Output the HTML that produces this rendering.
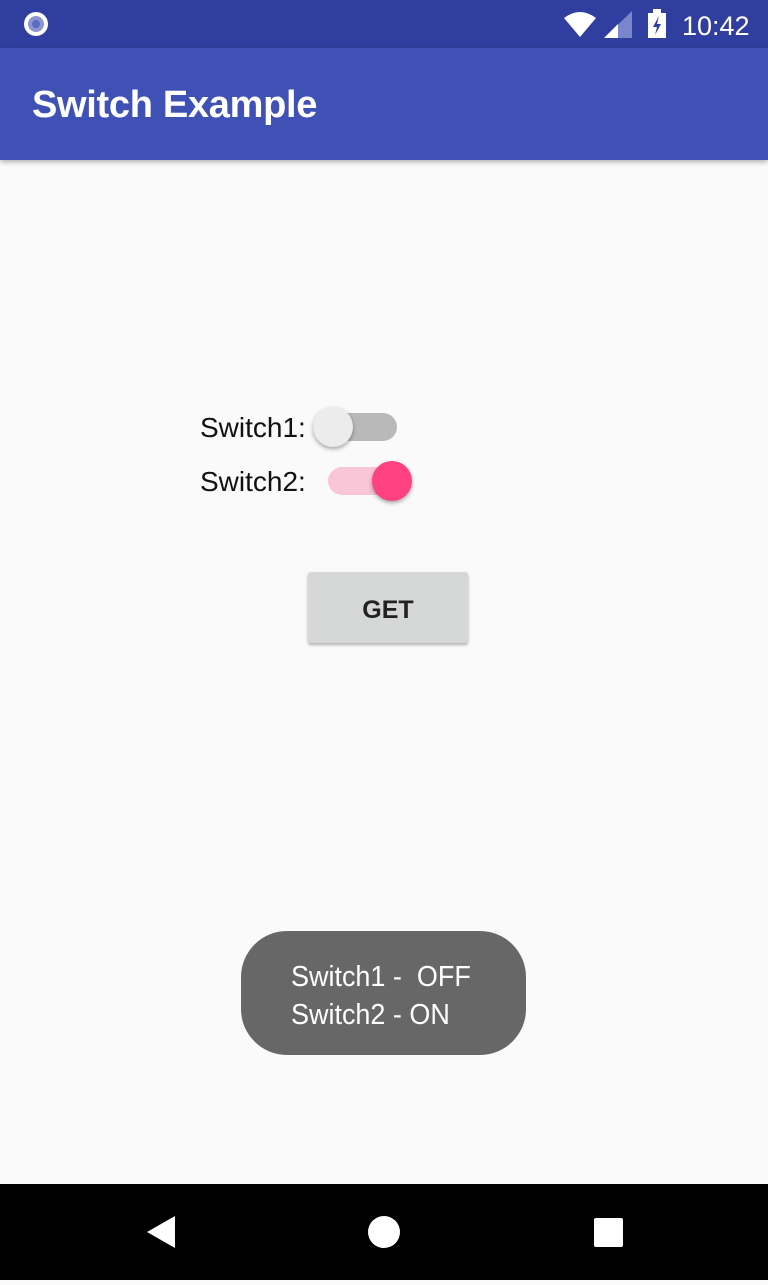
<!DOCTYPE html>
<html><head><meta charset="utf-8"><style>
body{margin:0;width:768px;height:1280px;background:#fafafa;font-family:"Liberation Sans",sans-serif;position:relative;overflow:hidden}
.sb{position:absolute;left:0;top:0;width:768px;height:48px;background:#303f9f}
.ab{position:absolute;left:0;top:48px;width:768px;height:112px;background:#3f51b5;box-shadow:0 2px 5px rgba(0,0,0,.3)}
.ab span{position:absolute;left:32px;top:36px;color:#fff;font-size:38px;font-weight:bold;letter-spacing:-0.3px}
.lbl{position:absolute;left:200px;font-size:28px;color:#111}
.track{position:absolute;height:28px;border-radius:14px}
.thumb{position:absolute;width:40px;height:40px;border-radius:50%;box-shadow:0 2px 4px rgba(0,0,0,.35)}
.btn{position:absolute;left:308px;top:572px;width:160px;height:71px;background:#d6d7d7;border-radius:3px;box-shadow:0 2px 3px rgba(0,0,0,.3);text-align:center;line-height:76px;font-size:25px;font-weight:bold;color:#222}
.toast{position:absolute;left:241px;top:931px;width:285px;height:124px;border-radius:46px;background:#676767;color:#fff;font-family:"Liberation Sans Narrow","Liberation Sans",sans-serif;font-size:29px;line-height:38px;box-sizing:border-box;padding:27px 0 0 50px}
.nav{position:absolute;left:0;top:1184px;width:768px;height:96px;background:#000}
</style></head><body>
<div class="sb">
<svg width="768" height="48" style="position:absolute;left:0;top:0">
<circle cx="36" cy="24" r="12" fill="#fff"/><circle cx="36" cy="24" r="8" fill="#8c95d0"/><circle cx="36" cy="24" r="4" fill="#5c6bc0"/>
<path d="M564 18 Q580 6 596 18 L580 37 Z" fill="#fff"/>
<path d="M632 11 L632 38 L604 38 Z" fill="#7986cb"/><path d="M618 24 L618 38 L604 38 Z" fill="#fff"/>
<rect x="648" y="13" width="18" height="25" fill="#fff"/><rect x="653" y="9" width="8" height="5" fill="#fff"/>
<path d="M659 16 L653 27 L657 27 L655 35 L661 24 L657 24 Z" fill="#303f9f"/>
<text x="682" y="35" fill="#fff" font-size="27" font-family="Liberation Sans Narrow, Liberation Sans, sans-serif">10:42</text>
</svg></div>
<div class="ab"><span>Switch Example</span></div>
<div class="lbl" style="top:412px">Switch1:</div>
<div class="track" style="left:313px;top:413px;width:84px;background:#b9b9b9"></div>
<div class="thumb" style="left:313px;top:407px;background:#ececec"></div>
<div class="lbl" style="top:466px">Switch2:</div>
<div class="track" style="left:328px;top:467px;width:82px;background:#f9c6d8"></div>
<div class="thumb" style="left:372px;top:461px;background:#ff4081"></div>
<div class="btn">GET</div>
<div class="toast"><span style="display:inline-block;transform:scaleX(.93);transform-origin:left">Switch1 -&nbsp; OFF<br>Switch2 - ON</span></div>
<div class="nav"><svg width="768" height="96">
<path d="M175 32 L175 64 L147 48 Z" fill="#fff"/>
<circle cx="384" cy="48" r="16" fill="#fff"/>
<rect x="594" y="34" width="29" height="29" rx="2" fill="#fff"/>
</svg></div>
</body></html>
